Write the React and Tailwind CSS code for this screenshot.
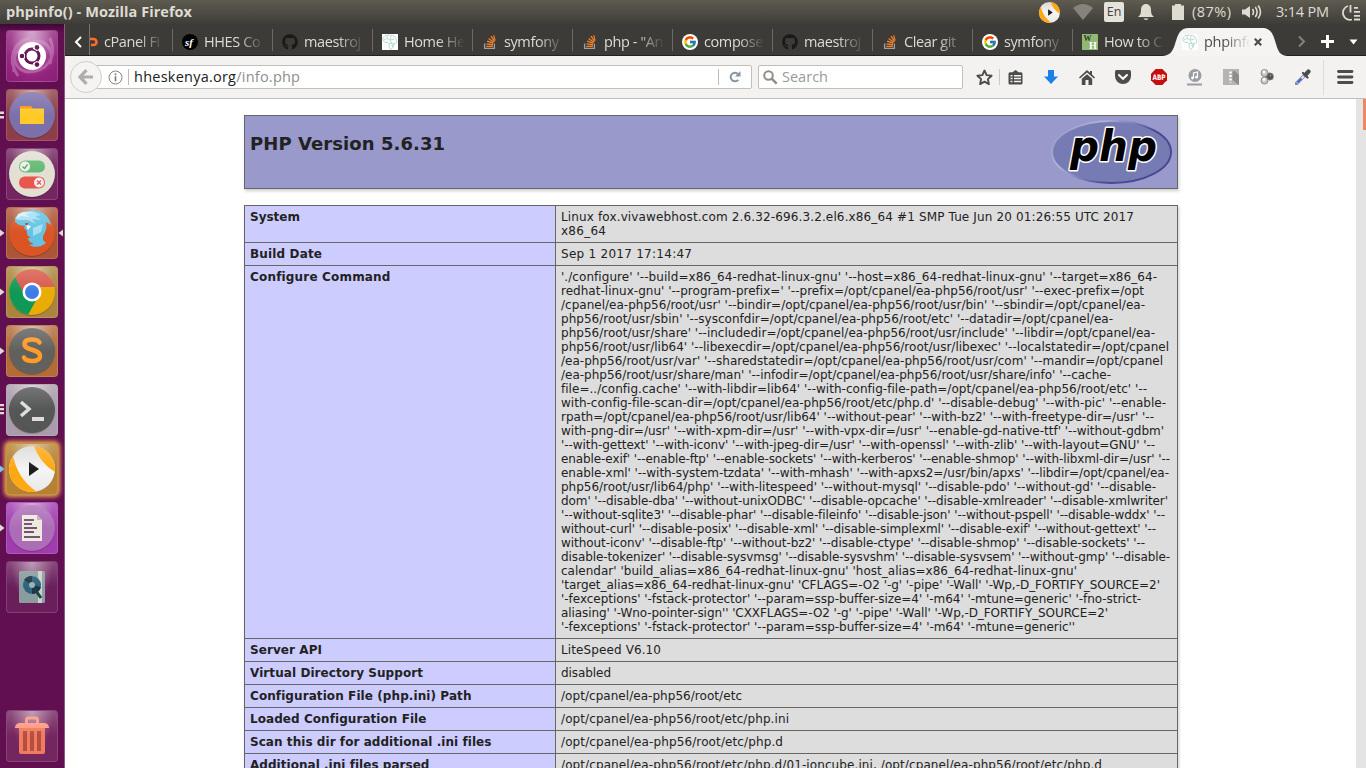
import React, { useLayoutEffect, useRef, useState } from "react";
import { FaGithub } from "react-icons/fa";
import { FcGoogle } from "react-icons/fc";

/* Spreads a single line of text to a given width by adjusting its letter spacing. */
const Fit = ({ width, children, className = "" }) => {
  const ref = useRef(null);
  const [spacing, setSpacing] = useState(0);
  useLayoutEffect(() => {
    const el = ref.current;
    el.style.letterSpacing = "0px";
    const natural = el.getBoundingClientRect().width;
    const next = (width - natural) / Math.max(1, el.textContent.length - 1);
    el.style.letterSpacing = `${next}px`;
    setSpacing(next);
  }, [width]);
  return <span ref={ref} className={`inline-block whitespace-nowrap ${className}`} style={{ letterSpacing: `${spacing}px` }}>{children}</span>;
};

const configure = [
  ["'./configure' '--build=x86_64-redhat-linux-gnu' '--host=x86_64-redhat-linux-gnu' '--target=x86_64-", 596],
  ["redhat-linux-gnu' '--program-prefix=' '--prefix=/opt/cpanel/ea-php56/root/usr' '--exec-prefix=/opt", 583],
  ["/cpanel/ea-php56/root/usr' '--bindir=/opt/cpanel/ea-php56/root/usr/bin' '--sbindir=/opt/cpanel/ea-", 584],
  ["php56/root/usr/sbin' '--sysconfdir=/opt/cpanel/ea-php56/root/etc' '--datadir=/opt/cpanel/ea-", 552],
  ["php56/root/usr/share' '--includedir=/opt/cpanel/ea-php56/root/usr/include' '--libdir=/opt/cpanel/ea-", 594],
  ["php56/root/usr/lib64' '--libexecdir=/opt/cpanel/ea-php56/root/usr/libexec' '--localstatedir=/opt/cpanel", 608],
  ["/ea-php56/root/usr/var' '--sharedstatedir=/opt/cpanel/ea-php56/root/usr/com' '--mandir=/opt/cpanel", 602],
  ["/ea-php56/root/usr/share/man' '--infodir=/opt/cpanel/ea-php56/root/usr/share/info' '--cache-", 550],
  ["file=../config.cache' '--with-libdir=lib64' '--with-config-file-path=/opt/cpanel/ea-php56/root/etc' '--", 586],
  ["with-config-file-scan-dir=/opt/cpanel/ea-php56/root/etc/php.d' '--disable-debug' '--with-pic' '--enable-", 605],
  ["rpath=/opt/cpanel/ea-php56/root/usr/lib64' '--without-pear' '--with-bz2' '--with-freetype-dir=/usr' '--", 593],
  ["with-png-dir=/usr' '--with-xpm-dir=/usr' '--with-vpx-dir=/usr' '--enable-gd-native-ttf' '--without-gdbm'", 603],
  ["'--with-gettext' '--with-iconv' '--with-jpeg-dir=/usr' '--with-openssl' '--with-zlib' '--with-layout=GNU' '--", 594],
  ["enable-exif' '--enable-ftp' '--enable-sockets' '--with-kerberos' '--enable-shmop' '--with-libxml-dir=/usr' '--", 609],
  ["enable-xml' '--with-system-tzdata' '--with-mhash' '--with-apxs2=/usr/bin/apxs' '--libdir=/opt/cpanel/ea-", 608],
  ["php56/root/usr/lib64/php' '--with-litespeed' '--without-mysql' '--disable-pdo' '--without-gd' '--disable-", 595],
  ["dom' '--disable-dba' '--without-unixODBC' '--disable-opcache' '--disable-xmlreader' '--disable-xmlwriter'", 607],
  ["'--without-sqlite3' '--disable-phar' '--disable-fileinfo' '--disable-json' '--without-pspell' '--disable-wddx' '--", 604],
  ["without-curl' '--disable-posix' '--disable-xml' '--disable-simplexml' '--disable-exif' '--without-gettext' '--", 595],
  ["without-iconv' '--disable-ftp' '--without-bz2' '--disable-ctype' '--disable-shmop' '--disable-sockets' '--", 584],
  ["disable-tokenizer' '--disable-sysvmsg' '--disable-sysvshm' '--disable-sysvsem' '--without-gmp' '--disable-", 609],
  ["calendar' 'build_alias=x86_64-redhat-linux-gnu' 'host_alias=x86_64-redhat-linux-gnu'", 516],
  ["'target_alias=x86_64-redhat-linux-gnu' 'CFLAGS=-O2 '-g' '-pipe' '-Wall' '-Wp,-D_FORTIFY_SOURCE=2'", 599],
  ["'-fexceptions' '-fstack-protector' '--param=ssp-buffer-size=4' '-m64' '-mtune=generic' '-fno-strict-", 580],
  ["aliasing' '-Wno-pointer-sign'' 'CXXFLAGS=-O2 '-g' '-pipe' '-Wall' '-Wp,-D_FORTIFY_SOURCE=2'", 547],
  ["'-fexceptions' '-fstack-protector' '--param=ssp-buffer-size=4' '-m64' '-mtune=generic''", 514],
];

const rows = [
  ["System", 50, [["Linux fox.vivawebhost.com 2.6.32-696.3.2.el6.x86_64 #1 SMP Tue Jun 20 01:26:55 UTC 2017", 573], ["x86_64", 45]]],
  ["Build Date", 72, [["Sep 1 2017 17:14:47", 131]]],
  ["Configure Command", 140, configure],
  ["Server API", 72, [["LiteSpeed V6.10", 100]]],
  ["Virtual Directory Support", 173, [["disabled", 50]]],
  ["Configuration File (php.ini) Path", 221, [["/opt/cpanel/ea-php56/root/etc", 181]]],
  ["Loaded Configuration File", 176, [["/opt/cpanel/ea-php56/root/etc/php.ini", 228]]],
  ["Scan this dir for additional .ini files", 241, [["/opt/cpanel/ea-php56/root/etc/php.d", 222]]],
  ["Additional .ini files parsed", 179, [["/opt/cpanel/ea-php56/root/etc/php.d/01-ioncube.ini, /opt/cpanel/ea-php56/root/etc/php.d", 541]]],
];

/* ---------- favicons ---------- */
const StackIcon = () => (
  <svg width="16" height="16" viewBox="0 0 16 16" fill="none">
    <path d="M2.600 9.600v4.800h9.800V9.600" stroke="#9b9fa4" strokeWidth="1.300" />
    <g stroke="#f47f24" strokeWidth="1.400">
      <path d="M4.300 12.400h6.600M4.500 9.900l6.500.9M5.100 7.200l6.100 2M6.600 4.500l5.200 3.700M9 2.200l3.600 5.200" />
    </g>
    <path d="M11.700 1.200l1.400 5.400" stroke="#f47f24" strokeWidth="1.200" />
  </svg>
);
const GithubIcon = () => <FaGithub size={16} color="#1b1817" />;
const GoogleIcon = () => (
  <span className="flex size-4 items-center justify-center rounded-full bg-white">
    <FcGoogle size={14} />
  </span>
);
const SymfonyIcon = () => (
  <svg width="16" height="16" viewBox="0 0 16 16">
    <circle cx="8" cy="8" r="8" fill="#000" />
    <text x="3" y="11.500" fontSize="11" fontWeight="bold" fontStyle="italic" fontFamily="Liberation Serif, serif" fill="#fff">sf</text>
  </svg>
);
const AfricaIcon = () => (
  <svg width="16" height="16" viewBox="0 0 16 16" fill="none">
    <path fill="#fff" d="M0 0h16v16H0z" />
    <path d="M1 4l2-2.500 4-.5 4 .8 2 1L14.500 6 15 8l-3 2-1 3.500L8.500 15.500 7 12.500 7.500 10 6 8.500 2.500 8.200 1 6zM5 1.500l.5 3L2 5.500M9 2l-.5 4 4-1M5.500 4.500l3 2 1 3 3 .5M7 9.500l3-.5.500 4" stroke="#9bcfc4" strokeWidth=".7" />
  </svg>
);
const WikiIcon = () => (
  <svg width="16" height="16" viewBox="0 0 16 16">
    <path fill="#93b874" d="M0 0h16v16H0z" />
    <text x="1.500" y="6.800" fontSize="8" fontWeight="bold" fontFamily="Liberation Serif, serif" fill="#2b3a22">W</text>
    <text x="7" y="14.600" fontSize="10" fontWeight="bold" fontFamily="Liberation Serif, serif" fill="#fff">H</text>
  </svg>
);

const tabs = [
  [SymfonyIcon, "HHES Co"],
  [GithubIcon, "maestroj"],
  [AfricaIcon, "Home He"],
  [StackIcon, "symfony"],
  [StackIcon, 'php - "An'],
  [GoogleIcon, "compose"],
  [GithubIcon, "maestroj"],
  [StackIcon, "Clear git"],
  [GoogleIcon, "symfony"],
  [WikiIcon, "How to C"],
];

const fade = "[mask-image:linear-gradient(to_right,#000_55%,transparent_98%)]";

const UcIcon = ({ size }) => (
  <svg width={size} height={size} viewBox="0 0 46 46">
    <defs>
      <clipPath id={"uc" + size}><circle cx="23" cy="23" r="23" /></clipPath>
      <linearGradient id={"ucg" + size} x1="0" y1="0" x2="0" y2="1">
        <stop offset="0" stopColor="#d8d8d8" /><stop offset=".5" stopColor="#f5f5f5" /><stop offset="1" stopColor="#e8e8e8" />
      </linearGradient>
    </defs>
    <g clipPath={`url(#uc${size})`}>
      <path fill={`url(#ucg${size})`} d="M0 0h46v46H0z" />
      <path fill="#ffa812" d="M4 10c3 12 8 25 24 36H0V10z" />
      <path fill="#ffa812" d="M25 0c4 11 11 20 21 26V0z" />
    </g>
    <path fill="#1c1c1c" d="M20 16l10 7-10 7z" />
  </svg>
);

/* ---------- launcher ---------- */
const Disc = ({ fill, children }) => (
  <svg width="48" height="48" viewBox="0 0 48 48">
    <circle cx="24" cy="25" r="23" fill="#000" opacity=".2" />
    <circle cx="24" cy="24" r="23" fill={fill} />
    {children}
  </svg>
);

const launcher = [
  {
    bg: "bg-[radial-gradient(circle_at_50%_40%,#b668a8,#94257f_65%,#8a1d77)]",
    icon: (
      <svg width="52" height="52" viewBox="0 0 52 52" fill="none">
        <path d="M8 42C4 22 18 8 36 12c8 3 11 12 8 22M12 46C0 28 8 12 24 8M44 8c8 20-4 34-22 34-10-1-15-10-13-18" stroke="#dba6d2" strokeOpacity=".4" strokeWidth="3" />
        <circle cx="26" cy="26" r="14" fill="#fff" />
        <circle cx="26" cy="26" r="7" stroke="#621555" strokeWidth="3" />
        <path d="M19 26h-4M29 20l3-5M29 32l3 5" stroke="#fff" strokeWidth="5" />
        <g fill="#621555"><circle cx="16" cy="26" r="2.300" /><circle cx="31" cy="17.400" r="2.300" /><circle cx="31" cy="34.600" r="2.300" /></g>
      </svg>
    ),
  },
  {
    bg: "bg-[#8e3e48]", left: 2,
    icon: (
      <Disc fill="#7c70aa">
        <path fill="#ff9416" d="M12 15h11l2 3v4H12z" /><path fill="#ffca28" d="M12 17.500h24V33H12z" />
      </Disc>
    ),
  },
  {
    bg: "bg-[#73265f]",
    icon: (
      <Disc fill="#e2dfd3">
        <rect x="11" y="10.500" width="26" height="12" rx="6" fill="#62b971" />
        <rect x="11" y="26.500" width="26" height="12" rx="6" fill="#e9564d" />
        <circle cx="17" cy="16.500" r="5" fill="#eee" /><circle cx="31" cy="32.500" r="5" fill="#eee" />
        <path d="M14.500 16.500l2 2 3-4" fill="none" stroke="#4aa35a" strokeWidth="1.300" />
        <path d="M29 30.500l4 4m0-4l-4 4" stroke="#e9564d" strokeWidth="1.300" />
      </Disc>
    ),
  },
  {
    bg: "bg-[#ad5637]", left: 1, right: true,
    icon: (
      <Disc fill="#da5424">
        <path fill="#63c3e4" d="M7 9c4-5 12-8 19-8 10 1 16 8 17 15l-5-3c1 6 0 9-3 14l0 4 3 3c-4 4-12 5-17 2l5-1c-3-1-6-3-6-6l3 0c-3-2-5-4-4-7l-3-3 1-2-6-1-4-3z" />
        <path fill="#a5def0" d="M7 9l7-6 10-1 9 4-6 1 6 4-9-1 4 5-8-4-10 0zM25 19l10-4-2 8-8 4z" />
        <path fill="#d6f1f8" d="M10 5l6-2 8 1-7 1 5 3-9-1-5 3z" />
        <path fill="#fff" d="M18 16l5 1-3 4z" /><path fill="#a93624" d="M17 14l4 .5-3 2z" />
      </Disc>
    ),
  },
  {
    bg: "bg-[#ab843f]", left: 1,
    icon: (
      <Disc fill="#e8ac05">
        <path fill="#d9584b" d="M7 9A23 23 0 0 1 46.500 19H24l-9 8z" />
        <path fill="#109856" d="M7 9A23 23 0 0 0 20 46.700l9-16-12-3z" />
        <circle cx="24" cy="24" r="9.500" fill="#fff" /><circle cx="24" cy="24" r="7" fill="#3f7de6" />
      </Disc>
    ),
  },
  {
    bg: "bg-[#b16c39]", left: 1,
    icon: (
      <Disc fill="#60605f">
        <path d="M31.500 15.500c-2-4-15-4.500-15 1.500 0 7 15.500 4.500 15.500 12 0 7-14.500 6-16 1.500" fill="none" stroke="#ff9b27" strokeWidth="4.500" strokeLinecap="round" />
      </Disc>
    ),
  },
  {
    bg: "bg-[#aa9cab]", left: 3,
    icon: (
      <Disc fill="#555656">
        <path d="M13 16l8 7-8 7" fill="none" stroke="#ddd" strokeWidth="3.500" /><path fill="#ddd" d="M24 31h12v4H24z" />
      </Disc>
    ),
  },
  { bg: "bg-[#b68131] shadow-[0_0_4px_2px_#f0a843]", left: 1, blue: true, icon: <UcIcon size={46} /> },
  {
    bg: "bg-[#a13caf]", left: 1,
    icon: (
      <Disc fill="#ad6db6">
        <path fill="#edeadc" d="M14 11h15l5 5v21H14z" /><path fill="#c8a7c5" d="M29 11v5h5z" />
        <path d="M16 16h10M16 20h8M16 24h13M16 28h10M16 33h16" stroke="#735278" strokeWidth="1.800" />
      </Disc>
    ),
  },
  {
    bg: "bg-[#6a1f5b]",
    icon: (
      <svg width="48" height="48" viewBox="0 0 48 48">
        <rect x="11" y="8" width="26" height="32" rx="1.500" fill="#8b9c9e" />
        <path fill="#c9d1cb" d="M30 8h4v32h-4z" />
        <circle cx="24" cy="22" r="9" fill="#2b647b" /><path fill="#173947" d="M24 22l-8-5a9 9 0 0 1 8-4zM24 22l9 2a9 9 0 0 1-9 7z" />
        <circle cx="24" cy="22" r="3" fill="#9fb0b2" /><path d="M26 25l7 10" stroke="#203e49" strokeWidth="3" />
      </svg>
    ),
  },
];

const trash = (
  <svg width="48" height="48" viewBox="0 0 48 48">
    <path d="M18.500 11V8q0-2 2-2h7q2 0 2 2v3" fill="none" stroke="#f89780" strokeWidth="3" />
    <path fill="#ff9a80" d="M11 11h26q4 1 4 5H7q0-4 4-5z" />
    <path fill="#f37a5e" d="M11 16h26v24q0 2-2 2H13q-2 0-2-2z" />
    <path stroke="#b24f43" strokeWidth="4" d="M17 19v20M24 19v20M31 19v20" />
  </svg>
);

const Tile = ({ item }) => (
  <div className="relative flex h-[52px] w-full shrink-0 pl-[6px]">
    <div className={`relative flex size-[52px] items-center justify-center overflow-visible rounded-[4px] border border-white/15 ${item.bg}`}>
      <div className="absolute inset-0 rounded-[3px] bg-[radial-gradient(ellipse_at_50%_0%,rgba(255,255,255,.45),transparent_60%)]" />
      <div className="relative flex shrink-0">{item.icon}</div>
      <div className="absolute inset-0 rounded-[3px] bg-linear-to-b from-white/20 to-transparent to-50%" />
    </div>
    {item.left && (
      <svg className="absolute top-[20px] left-0" width="5" height="12" viewBox="0 0 5 12">
        {item.left === 1 && <path fill={item.blue ? "#7cc5f0" : "#dfdbd2"} d="M0 2.500L4.500 6 0 9.500z" />}
        {item.left === 2 && <path fill="#dfdbd2" d="M0 2.500h4v2.500H0zM0 7h4v2.500H0z" />}
        {item.left === 3 && <path fill="#dfdbd2" d="M0 0h4v2.300H0zM0 4h4v2.300H0zM0 8h4v2.300H0z" />}
      </svg>
    )}
    {item.right && (
      <svg className="absolute top-[20px] right-px" width="5" height="12" viewBox="0 0 5 12"><path fill="#dfdbd2" d="M5 2.500L.5 6 5 9.500z" /></svg>
    )}
  </div>
);

const TopPanel = () => (
  <div className="flex h-6 shrink-0 items-center bg-linear-to-b from-[#5e5b50] to-[#3e3d38] pl-[6px] text-[#dfdbd2]">
    <Fit width={186} className="text-[14.500px] leading-6 font-bold">phpinfo() - Mozilla Firefox</Fit>
    <div className="ml-auto flex h-6 w-[327px] shrink-0 items-center">
      <div className="flex w-[22px]"><UcIcon size={21} /></div>
      <svg className="ml-[12px]" width="20" height="16" viewBox="0 0 20 16"><path fill="#85837b" d="M0 4Q10-4 20 4L10 16z" /></svg>
      <div className="ml-[11px] flex h-[20px] w-5 items-center justify-center rounded-[2px] bg-[#e6e3dc] text-[12.500px] font-medium text-[#45433e]">En</div>
      <svg className="ml-[14px]" width="16" height="18" viewBox="0 0 16 18" fill="#dfdbd2"><path d="M8 1c3 0 5 2.500 5 6 0 4 1 5 3 7H0c2-2 3-3 3-7 0-3.500 2-6 5-6zM5.500 15.500h5Q8 18.500 5.500 15.500z" /></svg>
      <svg className="ml-[18px]" width="12" height="16" viewBox="0 0 12 16"><path fill="#dfdbd2" d="M3 0h6v1.500h3V16H0V1.500h3z" /></svg>
      <div className="ml-[8px] flex w-[39px]"><Fit width={39} className="text-[14.500px]">(87%)</Fit></div>
      <svg className="ml-[11px]" width="20" height="16" viewBox="0 0 20 16" fill="none" stroke="#dfdbd2" strokeWidth="1.600"><path fill="#dfdbd2" stroke="none" d="M0 5.500h3L8 2v12l-5-3.500H0z" /><path d="M10.500 5q2 3 0 6M13.300 3q3.600 5 0 10M16.200 1.500q4.600 6.500 0 13" /></svg>
      <div className="ml-[14px] flex w-[54px]"><Fit width={53} className="text-[14.500px]">3:14 PM</Fit></div>
      <svg className="ml-[12px]" width="19" height="17" viewBox="0 0 19 17" fill="none" stroke="#dfdbd2" strokeWidth="1.800"><path d="M6 2a7 7 0 0 0 4 13.500M8.500 1v7.500M12 3.800h4M12 7.800h6M12 11.800h6M12 15.500h6" /></svg>
    </div>
  </div>
);

const TabStrip = () => (
  <div className="relative flex h-8 shrink-0 border-b border-[#23221f] bg-[#3c3b37] text-[14.500px] text-[#dfdbd2]">
    <div className="flex h-[31px] w-[24px] items-center justify-end">
      <svg className="mt-[4px] mr-[6px]" width="9" height="12" viewBox="0 0 9 12" fill="none" stroke="#fff" strokeWidth="2"><path d="M7 1L2 6l5 5" /></svg>
    </div>
    <div className="flex h-[31px] w-[83px] items-center overflow-hidden border-l border-[#77756f] pt-[4px]">
      <svg className="shrink-0" width="10" height="16" viewBox="0 0 10 16" fill="none"><path d="M0 5h3.500a3 3 0 0 1 0 6H1" stroke="#ff6c2c" strokeWidth="2.600" /></svg>
      <span className={`ml-[4px] w-[62px] overflow-hidden tracking-[-0.4px] whitespace-nowrap ${fade}`}>cPanel Fi</span>
    </div>
    {tabs.map(([Icon, label], i) => (
      <div key={i} className="flex h-[31px] w-[100px] shrink-0 items-center pt-[4px]">
        <span className="-mt-[3px] h-[22px] w-px bg-[#6b6963]" />
        <span className="ml-[9px] flex w-4 shrink-0"><Icon /></span>
        <span className={`ml-[6px] w-[62px] overflow-hidden tracking-[-0.4px] whitespace-nowrap ${fade}`}>{label}</span>
      </div>
    ))}
    <div className="relative -ml-[10px] h-8 w-[126px] shrink-0">
      <svg className="absolute inset-0" width="126" height="32" viewBox="0 0 126 32">
        <path fill="#f5f4f3" d="M0 32c8 0 11-5 13-12 3-10 5-16 14-16h73c9 0 11 6 14 16 2 7 4 12 12 12z" />
      </svg>
      <div className="relative flex h-8 items-center pt-[3px] pl-[20px] text-[#4c4c4c]">
        <AfricaIcon />
        <span className="ml-[6px] w-[47px] overflow-hidden tracking-[-0.3px] whitespace-nowrap [mask-image:linear-gradient(to_right,#000_45%,transparent_98%)]">phpinfo</span>
        <svg className="ml-[3px]" width="8" height="8" viewBox="0 0 8 8" stroke="#4d4d4d" strokeWidth="2.200"><path d="M.8.800l6.400 6.400M7.200.800L.8 7.200" /></svg>
      </div>
    </div>
    <svg className="mt-[11px] ml-[9px]" width="9" height="13" viewBox="0 0 9 13" fill="none" stroke="#84827c" strokeWidth="2"><path d="M2 1.500l5 5-5 5" /></svg>
    <svg className="mt-[11px] ml-[15px]" width="13" height="13" viewBox="0 0 13 13" stroke="#fff" strokeWidth="3"><path d="M6.500 0v13M0 6.500h13" /></svg>
    <svg className="mt-[15px] ml-[15px]" width="9" height="6" viewBox="0 0 9 6"><path fill="#fff" d="M.5.500h8L4.500 5.500z" /></svg>
  </div>
);

const Slot = ({ children }) => <div className="flex w-9 shrink-0 justify-center">{children}</div>;

const Toolbar = () => (
  <div className="flex h-[43px] shrink-0 items-center border-b border-[#c3c0bb] bg-[#f3f2f1] pl-[5px] text-[14px]">
    <div className="relative z-10 flex size-8 shrink-0 items-center justify-center rounded-full border border-[#d2cfcc] bg-[#f5f4f3]">
      <svg width="16" height="16" viewBox="0 0 16 16" fill="none" stroke="#adadad" strokeWidth="3.200"><path d="M8.500 1.200L2 8l6.500 6.800M2.500 8H15" /></svg>
    </div>
    <div className="-ml-[7px] flex h-[24px] w-[657px] shrink-0 items-center rounded-[2px] border border-[#c2bfbb] bg-white">
      <svg className="ml-[12px]" width="15" height="15" viewBox="0 0 15 15" fill="none"><circle cx="7.500" cy="7.500" r="6.500" stroke="#858585" /><path fill="#777" d="M6.700 3.500h1.600v1.700H6.700zM6.700 6.300h1.600v5H6.700z" /></svg>
      <span className="ml-[5px] h-4 w-px bg-[#bbb]" />
      <Fit width={166} className="ml-[5px] text-[14.500px] text-[#222]">hheskenya.org<span className="text-[#8e8e8e]">/info.php</span></Fit>
      <span className="ml-auto h-4 w-px bg-[#bbb]" />
      <svg className="mr-[10px] ml-[10px]" width="12" height="12" viewBox="0 0 12 12" fill="none"><path d="M9.300 8.800A4.300 4.300 0 1 1 9 3" stroke="#8796a5" strokeWidth="2" /><path fill="#8796a5" d="M11.500 0v5.500H6z" /></svg>
    </div>
    <div className="ml-[6px] flex h-[24px] w-[205px] shrink-0 items-center rounded-[2px] border border-[#c2bfbb] bg-white">
      <svg className="ml-[4px]" width="15" height="15" viewBox="0 0 15 15" fill="none" stroke="#8d8d8d"><circle cx="5.500" cy="5.500" r="4.300" strokeWidth="2" /><path d="M8.700 8.700l5 5" strokeWidth="2.500" /></svg>
      <Fit width={46} className="ml-[4px] text-[14.500px] text-[#999]">Search</Fit>
    </div>
    <div className="ml-[3px] flex items-center">
      <Slot>
        <svg width="17" height="17" viewBox="0 0 17 17" fill="none" stroke="#4c4c4c" strokeWidth="1.900" strokeLinejoin="round"><path d="M8.500 1.500l2.100 4.600 5 .6-3.700 3.400 1 5-4.400-2.500-4.400 2.500 1-5L1.400 6.700l5-.6z" /></svg>
      </Slot>
      <div className="-ml-[3px] h-4 w-px bg-[#c9c7c4]" />
      <div className="-ml-[3px] flex items-center">
        <Slot><svg width="15" height="15" viewBox="0 0 15 15"><path fill="#4c4c4c" d="M7.500 0l3 2.200H13q1.500 0 1.500 1.500V13q0 1.500-1.500 1.500H2Q.5 14.500.5 13V3.700Q.5 2.200 2 2.200h2.500z" /><path d="M2.500 5.800h2M6 5.800h7M2.500 8.600h2M6 8.600h7M2.500 11.400h2M6 11.400h7" stroke="#f3f2f1" strokeWidth="1.500" /></svg></Slot>
        <Slot><svg width="14" height="14" viewBox="0 0 14 14"><path fill="#1b81e8" d="M4 0h6v6.500h4L7 14 0 6.500h4z" /></svg></Slot>
        <Slot><svg width="16" height="15" viewBox="0 0 16 15"><path fill="#4c4c4c" d="M8 0l3 2.800V1h2v3.600l3 2.900-1 1L8 2.400 1 8.500l-1-1zM2.800 8.800L8 4.300l5.200 4.500V15H9.500v-5h-3v5H2.800z" /></svg></Slot>
        <Slot><svg width="16" height="14" viewBox="0 0 16 14"><path fill="#4c4c4c" d="M1.500 0h13Q16 0 16 1.500V6a8 8 0 0 1-16 0V1.500Q0 0 1.500 0z" /><path d="M4 5l4 3.800L12 5" fill="none" stroke="#fff" strokeWidth="2" strokeLinecap="round" /></svg></Slot>
        <Slot><svg width="16" height="16" viewBox="0 0 16 16"><path fill="#c70d0d" d="M4.700 0h6.600L16 4.700v6.600L11.300 16H4.700L0 11.300V4.700z" /><text x="1.500" y="10.800" textLength="13" lengthAdjust="spacingAndGlyphs" fontSize="7.500" fontWeight="bold" fontFamily="DejaVu Sans, sans-serif" fill="#fff">ABP</text></svg></Slot>
        <Slot><svg width="16" height="17" viewBox="0 0 16 17"><circle cx="8" cy="6.500" r="6.500" fill="#999ca0" /><path d="M6.500 9V4l4-1v5" fill="none" stroke="#fff" strokeWidth="1.200" /><g fill="#fff"><circle cx="5.500" cy="9" r="1.400" /><circle cx="9.500" cy="8.200" r="1.400" /></g><path fill="#999ca0" d="M0 14.500h15v2H0z" /></svg></Slot>
        <Slot><svg width="16" height="16" viewBox="0 0 16 16"><path fill="#b4b4b4" d="M0 0h16v16H0z" /><path fill="#8d8d8d" d="M9.500 2.500L12 2l4 4v10l-6.500-5z" /><path d="M7.500 2.500v11" stroke="#fff" strokeWidth="2.400" strokeDasharray="2 1.500" /></svg></Slot>
        <Slot><svg width="14" height="16" viewBox="0 0 14 16"><g stroke="#777" strokeWidth=".8"><circle cx="9.800" cy="7.500" r="3.600" fill="#555" /><circle cx="4.500" cy="4" r="3.500" fill="#c9c9c9" /><circle cx="4.500" cy="11.500" r="3.500" fill="#c9c9c9" /></g><circle cx="4" cy="3" r="1.400" fill="#fff" /><circle cx="4" cy="10.500" r="1.400" fill="#fff" /><circle cx="10.500" cy="6.500" r=".8" fill="#aaa" /></svg></Slot>
        <Slot><svg width="16" height="16" viewBox="0 0 16 16" fill="none"><path d="M1.500 14.500L9 7" stroke="#7d8797" strokeWidth="3.400" strokeLinecap="round" /><path d="M2 14L8.800 7.200" stroke="#dfe5ee" strokeWidth="2" /><path d="M2.500 13.500l4-4" stroke="#3b62dd" strokeWidth="2" /><path d="M8 4l4.500 4.500" stroke="#4b4c51" strokeWidth="2.300" strokeLinecap="round" /><path d="M11 5.200L13.500 2.500" stroke="#4b4c51" strokeWidth="4.200" strokeLinecap="round" /></svg></Slot>
      </div>
      <div className="ml-[2px] h-[35px] w-px bg-[#dddbd8]" />
      <svg className="ml-[13px]" width="17" height="14" viewBox="0 0 17 14"><path stroke="#4c4c4c" strokeWidth="2.800" strokeLinecap="round" d="M1.500 1.500h13.500M1.500 7h13.500M1.500 12.500h13.500" /></svg>
    </div>
  </div>
);

const PhpLogo = () => (
  <svg width="122" height="66" viewBox="0 0 122 66">
    <defs>
      <linearGradient id="rim" x1="0" y1="0" x2="1" y2=".5">
        <stop offset="0" stopColor="#9194c5" /><stop offset=".35" stopColor="#aeb1d8" /><stop offset=".6" stopColor="#7075b3" /><stop offset=".75" stopColor="#484893" /><stop offset="1" stopColor="#484893" />
      </linearGradient>
    </defs>
    <ellipse cx="61.500" cy="33" rx="59.500" ry="31" fill="#777bb3" stroke="url(#rim)" strokeWidth="2" />
    <text x="20" y="42" textLength="87" lengthAdjust="spacingAndGlyphs" fontSize="42.500" fontWeight="bold" fontStyle="italic" fontFamily="DejaVu Sans, sans-serif" fill="#000" stroke="#fff" strokeWidth="3" paintOrder="stroke" strokeLinejoin="round">php</text>
  </svg>
);

const Page = () => (
  <div className="flex min-h-0 flex-1 bg-white font-['DejaVu_Sans',sans-serif] text-[12px] leading-[14px] text-[#222]">
    <div className="flex h-full min-w-0 flex-1 flex-col overflow-hidden pt-4 pl-[179px]">
      <div className="flex h-[74px] w-[934px] shrink-0 justify-between border border-[#666] bg-[#9999cc] px-[5px] shadow-[1px_2px_3px_#ccc]">
        <h1 className="mt-[17px] text-[18px] leading-[21px] font-bold"><Fit width={195}>PHP Version 5.6.31</Fit></h1>
        <div className="pt-[3px]"><PhpLogo /></div>
      </div>
      <div className="mt-4 w-[934px] shrink-0 border border-[#666] shadow-[1px_2px_3px_#ccc]">
        {rows.map(([name, width, lines]) => (
          <div key={name} className="flex border-b border-[#666]">
            <div className="w-[311px] shrink-0 border-r border-[#666] bg-[#ccccff] px-[5px] py-1 font-bold whitespace-nowrap"><Fit width={width}>{name}</Fit></div>
            <div className="flex min-w-0 flex-1 flex-col items-start bg-[#dddddd] px-[5px] py-1 whitespace-nowrap">
              {lines.map(([line, w], i) => <Fit key={i} width={w}>{line}</Fit>)}
            </div>
          </div>
        ))}
      </div>
    </div>
    <div className="flex w-[10px] shrink-0 justify-end bg-[#e4e4e4]"><div className="h-[31px] w-[3px] bg-[#f08763]" /></div>
  </div>
);

export default function App() {
  return (
    <div className="flex h-[768px] w-[1366px] flex-col overflow-hidden font-['Open_Sans','Noto_Sans',sans-serif]">
      <TopPanel />
      <div className="flex min-h-0 flex-1">
        <div className="flex w-[65px] shrink-0 flex-col gap-[7px] border-r border-[#8b5a80] bg-[#610f50] bg-linear-to-b from-[#3f0835] via-[#610f50] via-[8px] to-[#610f50] pt-[6px] pb-[6px]">
          {launcher.map((item, i) => <Tile key={i} item={item} />)}
          <div className="mt-auto"><Tile item={{ bg: "bg-[#74265f]", icon: trash }} /></div>
        </div>
        <div className="flex min-w-0 flex-1 flex-col">
          <TabStrip />
          <Toolbar />
          <Page />
        </div>
      </div>
    </div>
  );
}
